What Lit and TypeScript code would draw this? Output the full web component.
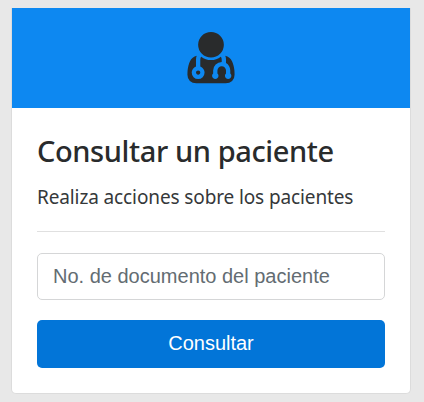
import { LitElement, html, css } from "lit";
import { customElement } from "lit/decorators.js";

@customElement("app-root")
export class AppRoot extends LitElement {
  static styles = css`
    :host {
      display: block;
      box-sizing: border-box;
      height: 402px;
      padding: 8px 13px 8px 11px;
      background: #e8e8e8;
      overflow: hidden;
      color: #292b2c;
      font-family: "Segoe UI", "Noto Sans", sans-serif;
    }
    * {
      box-sizing: border-box;
    }
    .card {
      display: flex;
      flex-direction: column;
      height: 386px;
      background: #fff;
      border: 1px solid #dcdcdc;
      border-top: 0;
      border-radius: 0 0 5px 5px;
    }
    .banner {
      display: flex;
      justify-content: center;
      height: 100px;
      padding-top: 20px;
      background: #0d88f1;
    }
    .icon {
      display: block;
      width: 60px;
      height: 60px;
      fill: #292b2c;
    }
    .body {
      display: flex;
      flex-direction: column;
      padding: 25px 25px 0;
    }
    .title {
      margin: 0;
      font-size: 29px;
      font-weight: 500;
      line-height: 36px;
      letter-spacing: -0.4px;
      white-space: nowrap;
    }
    .text {
      margin: 10px 0 0;
      color: #35383a;
      font-size: 19px;
      font-weight: 400;
      line-height: 36px;
      letter-spacing: -0.12px;
      white-space: nowrap;
    }
    .rule {
      height: 1px;
      margin: 16px 0 21px;
      background: #e0e0e0;
    }
    .field,
    .button {
      display: block;
      width: 100%;
      margin: 0;
      border-radius: 5px;
      font-family: "Liberation Sans", Arial, sans-serif;
      font-size: 20px;
    }
    .field {
      height: 47px;
      padding: 0 15px;
      border: 1px solid #d5d6d7;
      background: #fff;
      color: #292b2c;
    }
    .field::placeholder {
      color: #636c72;
      opacity: 1;
    }
    .button {
      height: 48px;
      margin-top: 20px;
      padding: 0 0 2px;
      border: 0;
      background: #0275d8;
      color: #fff;
    }
  `;

  render() {
    return html`
      <section class="card">
        <div class="banner">
          <svg class="icon" viewBox="0 12 1792 1792" aria-hidden="true">
            <path
              d="M576 1344q0 26-19 45t-45 19-45-19-19-45 19-45 45-19 45 19 19 45zm1024 61q0 121-73 190t-194 69H459q-121 0-194-69t-73-190q0-68 5.5-131t24-138 47.5-132.5 81-103 120-60.5q-22 52-22 120v203q-58 20-93 70t-35 111q0 80 56 136t136 56 136-56 56-136q0-61-35.5-111t-92.5-70v-203q0-62 25-93 132 104 295 104t295-104q25 31 25 93v64q-106 0-181 75t-75 181v89q-32 29-32 71 0 40 28 68t68 28 68-28 28-68q0-42-32-71v-89q0-52 38-90t90-38 90 38 38 90v89q-32 29-32 71 0 40 28 68t68 28 68-28 28-68q0-42-32-71v-89q0-68-34.5-127.5t-93.5-93.5q0-10 .5-42.5t0-48-2.5-41.5-7-47-13-40q68 15 120 60.5t81 103 47.5 132.5 24 138 5.5 131zm-320-893q0 159-112.5 271.5t-271.5 112.5-271.5-112.5-112.5-271.5 112.5-271.5 271.5-112.5 271.5 112.5 112.5 271.5z"
            />
          </svg>
        </div>
        <div class="body">
          <h1 class="title">Consultar un paciente</h1>
          <p class="text">Realiza acciones sobre los pacientes</p>
          <div class="rule"></div>
          <input class="field" type="text" placeholder="No. de documento del paciente" />
          <button class="button" type="button">Consultar</button>
        </div>
      </section>
    `;
  }
}
